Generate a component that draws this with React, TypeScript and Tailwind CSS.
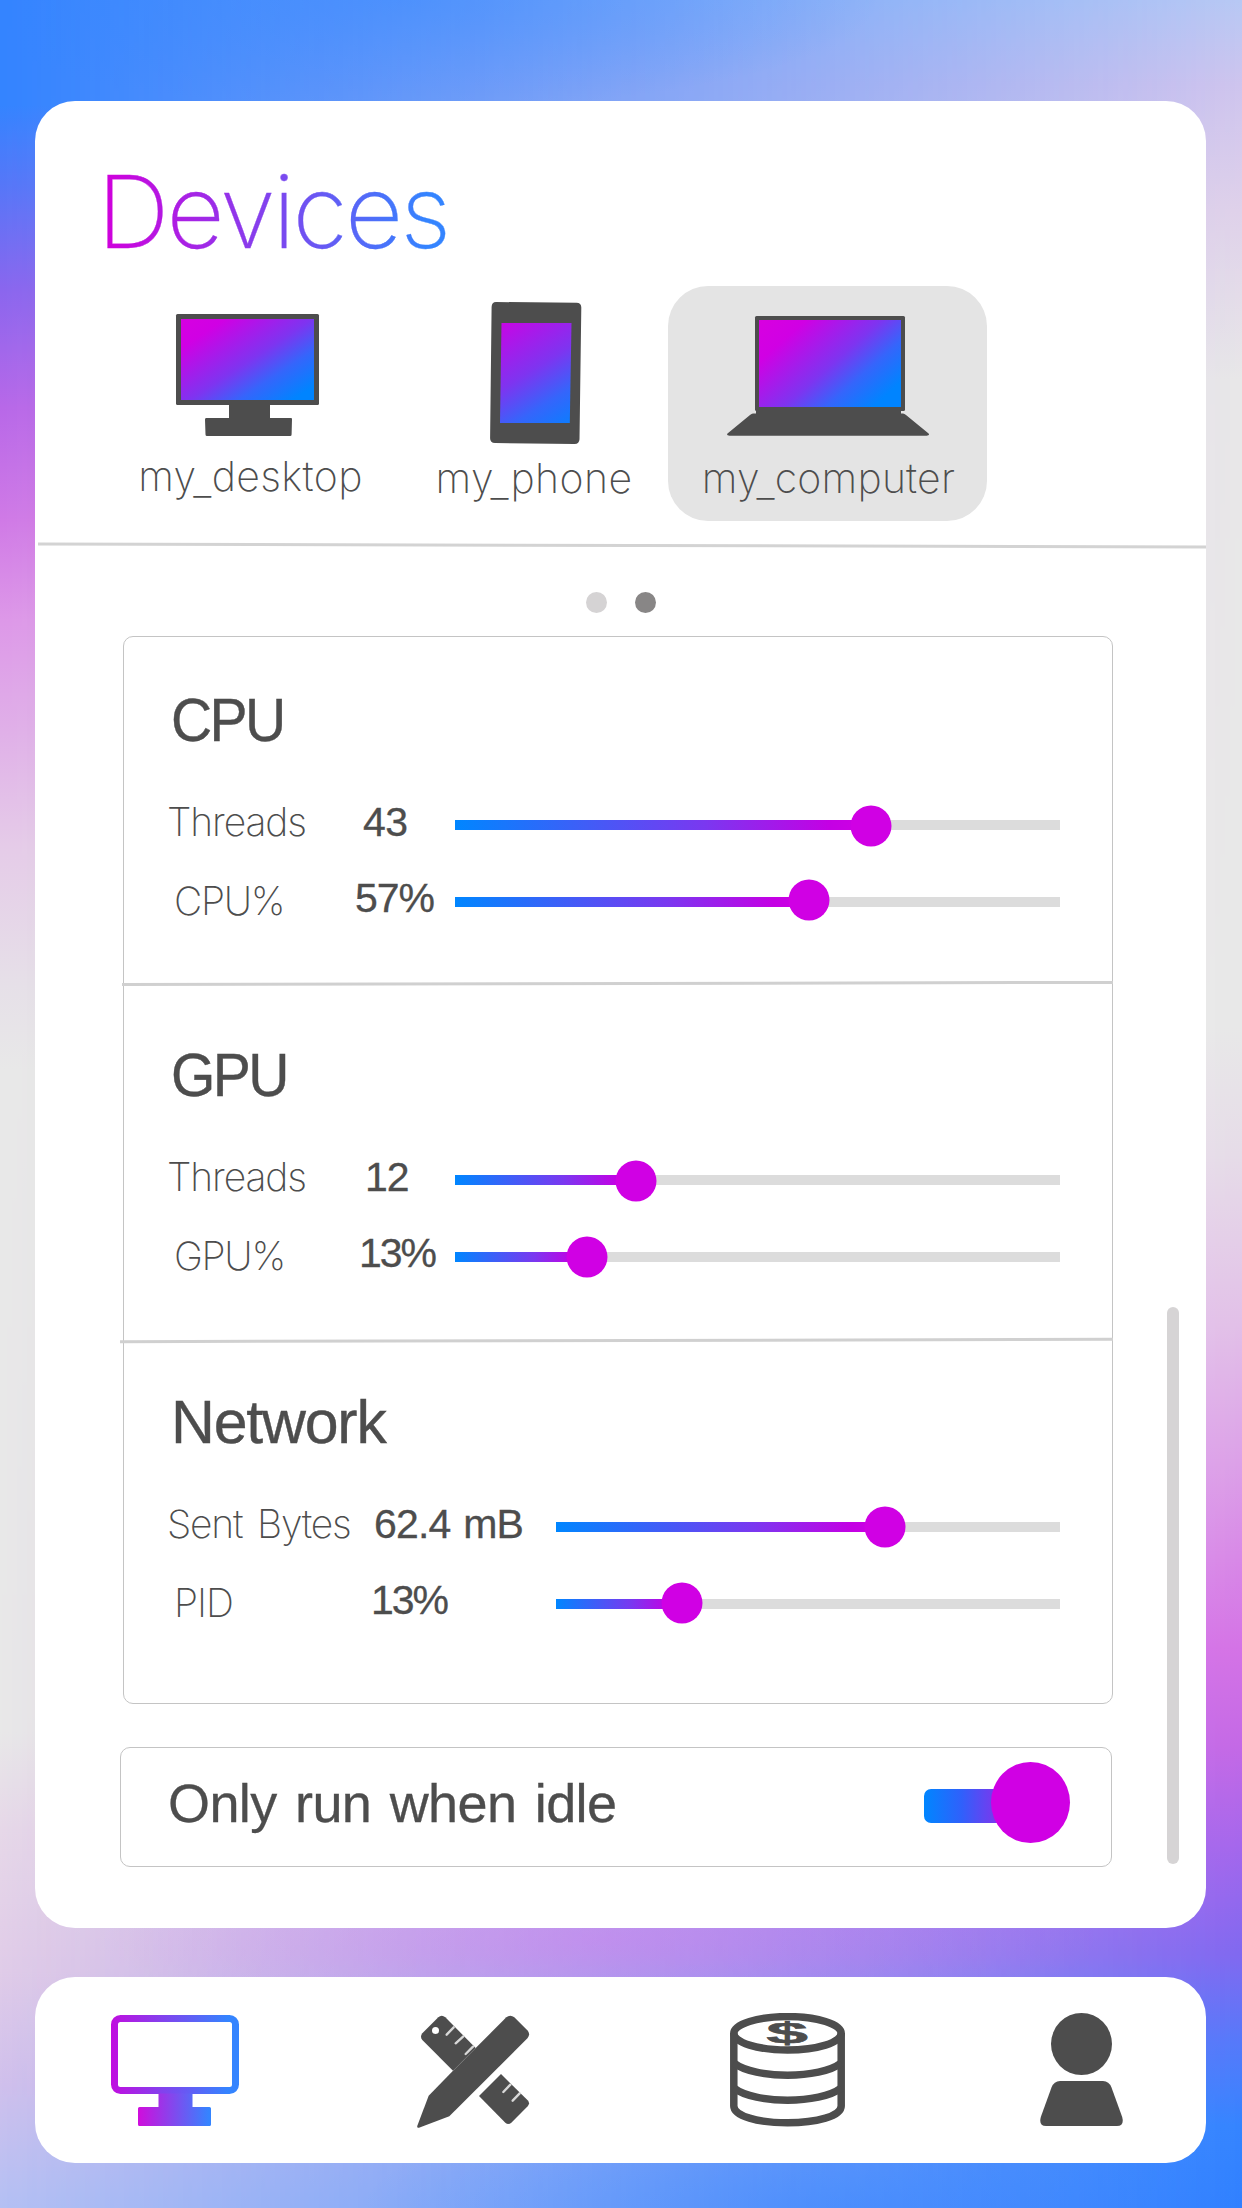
import type { ReactNode } from "react";

const INK = "#4d4d4d";

function Backdrop() {
  return (
    <>
      <div className="absolute inset-0 bg-[linear-gradient(to_bottom,#3484ff_0px,#3484ff_105px,#5577f8_183px,#8a66ee_289px,#b868e8_408px,#d07ae6_521px,#dd98e8_620px,#e0b0e8_732px,#e5cbe8_845px,#e6e0e8_986px,#e8e8e8_1070px,#e8e8e8_1732px,#e6d8e8_1830px,#e0cce8_1971px,#d0c0ec_2084px,#b4c0f4_2208px)]" />
      <div className="absolute inset-0 bg-[linear-gradient(to_bottom,#b8c8f4_0px,#cfc4ee_85px,#e0d2ea_211px,#e8e8e8_380px,#e8e8e8_1028px,#e6dce8_1155px,#e2c0e8_1324px,#dca0e8_1465px,#d472e6_1648px,#c468e6_1746px,#a566ec_1845px,#8068f0_1955px,#5578fa_2042px,#3484ff_2126px,#3080ff_2208px)] [mask-image:linear-gradient(to_right,transparent,black)]" />
      <div className="absolute inset-0 bg-[radial-gradient(ellipse_480px_110px_at_400px_0px,#3484ff66,#3484ff00),radial-gradient(ellipse_480px_110px_at_842px_2208px,#3484ff66,#3484ff00),radial-gradient(ellipse_500px_90px_at_600px_1940px,#d07cf066,#d07cf000)]" />
    </>
  );
}

function ScreenGradient({ id, x1, y1, x2, y2 }: { id: string; x1: number; y1: number; x2: number; y2: number }) {
  return (
    <linearGradient id={id} gradientUnits="userSpaceOnUse" x1={x1} y1={y1} x2={x2} y2={y2}>
      <stop offset="0" stopColor="#d800e0" />
      <stop offset="0.2" stopColor="#d000e4" />
      <stop offset="0.52" stopColor="#7e34f0" />
      <stop offset="0.7" stopColor="#3565fb" />
      <stop offset="0.9" stopColor="#0084ff" />
      <stop offset="1" stopColor="#0084ff" />
    </linearGradient>
  );
}

function DesktopIcon() {
  return (
    <svg className="h-[165px] w-[271px]" viewBox="115 286 271 165" fill={INK}>
      <defs>
        <ScreenGradient id="desk" x1={204} y1={297} x2={287} y2={422} />
      </defs>
      <rect x="176" y="314" width="143" height="91" rx="1.5" />
      <rect x="181" y="319" width="133" height="81" fill="url(#desk)" />
      <rect x="229" y="404" width="41" height="15" />
      <path d="M206 418h85q1 0 1 1l-.4 15.500q0 1.500-1.500 1.500H207q-1.500 0-1.500-1.500L205 419.500q0-1.500 1-1.500z" />
    </svg>
  );
}

function PhoneIcon() {
  return (
    <svg className="h-[167px] w-[268px]" viewBox="400 286 268 167" fill={INK}>
      <defs>
        <ScreenGradient id="phone" x1={475} y1={285} x2={580} y2={452} />
      </defs>
      <path d="M496 302l80.500.8q5 .2 4.800 5l-1.800 131.400q-.3 4.900-5 4.800l-79.500-1q-5-.2-4.900-5l1.500-131q.2-5 4.400-5z" />
      <path d="M501.500 323H571.500L569.800 423H500z" fill="url(#phone)" />
    </svg>
  );
}

function LaptopIcon() {
  return (
    <svg className="h-[167px] w-[319px]" viewBox="668 286 319 167" fill={INK}>
      <defs>
        <ScreenGradient id="lap" x1={778} y1={303} x2={882} y2={420} />
      </defs>
      <rect x="755" y="316" width="150" height="95" rx="1.500" />
      <rect x="759" y="320" width="142" height="87" fill="url(#lap)" />
      <path d="M756 407h145v6.500h2q1.500 0 3 1.500l22.600 18.500q1.500 2-2 2.200H729.500q-3.500-.2-2-2.200L750 415q1.500-1.500 3-1.500h3z" />
    </svg>
  );
}

function DeviceTab({ owner, name, icon, box, text }: { owner: string; name: string; icon: ReactNode; box: string; text: string }) {
  return (
    <button className={`flex h-[235px] flex-col items-center ${box}`}>
      {icon}
      <span className={`text-[41px] leading-[50px] font-extralight whitespace-nowrap ${text}`}>
        {owner}
        <span className="relative top-[5px]">_</span>
        {name}
      </span>
    </button>
  );
}

function Slider({ fill, drop = 0 }: { fill: number; drop?: number }) {
  return (
    <div className="relative h-[10px] grow bg-[#dcdcdc]">
      <div className="h-full bg-[linear-gradient(to_right,#0086ff,#7a38f0_60%,#c400e4_90%,#d000e4)]" style={{ width: fill }} />
      <div
        className="absolute top-1/2 h-[41px] w-[41px] -translate-x-1/2 -translate-y-1/2 rounded-full bg-[#d000e4]"
        style={{ left: fill, marginTop: drop }}
      />
    </div>
  );
}

type RowProps = {
  label: string;
  value: string;
  fill: number;
  drop?: number;
  labelBox: string;
  valueBox: string;
};

function MetricRow({ label, value, fill, drop, labelBox, valueBox }: RowProps) {
  return (
    <div className="flex h-[77px] items-center">
      <span className={`shrink-0 text-[39px] leading-[48px] font-extralight whitespace-nowrap ${labelBox}`}>{label}</span>
      <span
        className={`shrink-0 font-['Liberation_Sans',sans-serif] text-[41px] leading-[48px] whitespace-nowrap [-webkit-text-stroke:0.3px] ${valueBox}`}
      >
        {value}
      </span>
      <Slider fill={fill} drop={drop} />
    </div>
  );
}

function Section({ title, box, heading, children }: { title: string; box: string; heading: string; children: ReactNode }) {
  return (
    <section className={`pr-[52px] pl-[43px] ${box}`}>
      <h2 className={`origin-left font-['Liberation_Sans',sans-serif] text-[62px] leading-[80px] [-webkit-text-stroke:0.4px] ${heading}`}>
        {title}
      </h2>
      {children}
    </section>
  );
}

function BottomNav() {
  return (
    <nav className="relative mt-[49px] flex h-[186px] items-center rounded-[40px] bg-white pl-[76px]">
      <svg className="h-[114px] w-[128px]" viewBox="111 2013 128 114">
        <defs>
          <linearGradient id="nav-frame" gradientUnits="userSpaceOnUse" x1="98" x2="228" y1="0" y2="0">
            <stop offset="0" stopColor="#d000dc" />
            <stop offset="1" stopColor="#3484ff" />
          </linearGradient>
          <linearGradient id="nav-base" gradientUnits="userSpaceOnUse" x1="138" x2="209" y1="0" y2="0">
            <stop offset="0" stopColor="#d00ddc" />
            <stop offset="1" stopColor="#3484ff" />
          </linearGradient>
        </defs>
        <rect x="114.500" y="2018.500" width="121" height="72" rx="6" fill="none" stroke="url(#nav-frame)" strokeWidth="7" />
        <path d="M158.500 2093.500h34v13.500h17q1.500 0 1.500 1.500v16q0 1.500-1.500 1.500h-70q-1.500 0-1.500-1.500v-16q0-1.500 1.500-1.500h19z" fill="url(#nav-base)" />
      </svg>
      <svg className="ml-[176px] h-[114px] w-[117px]" viewBox="1005 159 351 342" fill={INK} overflow="visible">
        <path d="M1027 220L1075 172Q1085 163 1096 172L1187 264L1119 332L1027 240Q1019 230 1027 220Z" />
        <path d="M1012 497L1046 407L1119 332L1279 172Q1291 163 1303 172L1342 211Q1352 222 1343 234L1108 469L1017 503Q1010 505 1012 497Z" />
        <path d="M1263 342L1343 421Q1351 430 1343 439L1294 488Q1285 496 1276 488L1197 408Z" />
        <circle cx="1066.500" cy="211.500" r="10.500" fill="#fff" />
        <path d="M1121 202l-21 22M1150 229l-23 21M1179 260l-22 22M1291 374l-21 22M1319 400l-21 22" stroke="#d8d8d8" strokeWidth="7" strokeLinecap="round" />
      </svg>
      <svg className="ml-[198px] h-[114px] w-[115px]" viewBox="0 0 115 114" fill="none" stroke={INK} strokeWidth="7.500">
        <ellipse cx="57.500" cy="20.300" rx="53.700" ry="16.700" />
        <path d="M3.800 20V93C3.800 103 28 109.800 57.500 109.800S111.200 103 111.200 93V20" />
        <path d="M3.800 50C25 66.300 90 66.300 111.200 50M3.800 75C25 91.300 90 91.300 111.200 75" />
        <text
          transform="translate(57 30) scale(2.500 1)"
          textAnchor="middle"
          fontFamily="Liberation Sans, sans-serif"
          fontWeight="700"
          fontSize="30"
          fill={INK}
          stroke={INK}
          strokeWidth="0.5"
        >
          $
        </text>
      </svg>
      <svg className="ml-[195px] h-[114px] w-[83px]" viewBox="0 0 83 114" fill={INK}>
        <ellipse cx="41.500" cy="31" rx="30.500" ry="31" />
        <path d="M20 68H63Q69 68 71.500 74.500L82.200 104Q84.500 113 77 113H6Q-1.500 113 .8 104L11.500 74.500Q14 68 20 68Z" />
      </svg>
    </nav>
  );
}

export default function App() {
  return (
    <div className="relative h-[2208px] w-[1242px] overflow-hidden pt-[101px] pr-[36px] pl-[35px] font-['Inter',sans-serif] text-[#4d4d4d]">
      <Backdrop />
      <main className="relative h-[1827px] rounded-[40px] bg-white pt-[50px]">
        <h1 className="ml-[62px] h-[120px] w-[360px] bg-[linear-gradient(to_right,#d000dc_8px,#3484ff_330px)] bg-clip-text text-[101px] leading-[120px] font-extralight tracking-[-2.800px] whitespace-nowrap text-transparent [-webkit-text-stroke:0.3px_transparent]">
          Devices
        </h1>

        <div className="mt-[15px] flex pl-[80px]">
          <DeviceTab owner="my" name="desktop" icon={<DesktopIcon />} box="w-[271px]" text="tracking-[0.400px]" />
          <DeviceTab owner="my" name="phone" icon={<PhoneIcon />} box="ml-[14px] w-[268px]" text="tracking-[0.400px]" />
          <DeviceTab owner="my" name="computer" icon={<LaptopIcon />} box="w-[319px] rounded-[40px] bg-[#e4e4e4]" text="pl-[2px] tracking-[0.200px]" />
        </div>

        <div className="mt-[23px] ml-[3px] h-[3px] rotate-[0.150deg] bg-[#d3d3d3]" />

        <div className="mt-[45px] ml-[551px] flex gap-[28px]">
          <span className="h-[21px] w-[21px] rounded-full bg-[#d5d3d4]" />
          <span className="h-[21px] w-[21px] rounded-full bg-[#888686]" />
        </div>

        <div className="mt-[23px] ml-[88px] h-[1068px] w-[990px] rounded-[10px] border border-[#c4c4c4]">
          <Section title="CPU" box="h-[345px] pt-[43px]" heading="mb-[26px] ml-[4px] scale-x-[0.920] tracking-[-2.800px]">
            <MetricRow label="Threads" value="43" fill={415.5} drop={1} labelBox="w-[187px] pb-[6px] tracking-[-1.100px]" valueBox="w-[101px] pl-[9px] pb-[5px] tracking-[-0.500px]" />
            <MetricRow label="CPU%" value="57%" fill={353.5} drop={-2} labelBox="w-[187px] pl-[7px] pb-[1px] tracking-[-1.300px]" valueBox="w-[101px] pl-[1px] pb-[8px] tracking-[-1px]" />
          </Section>
          <div className="-ml-[2px] h-[2.500px] w-[991px] rotate-[-0.130deg] bg-[#d0d0d0]" />
          <Section title="GPU" box="mt-[0.500px] h-[354px] pt-[50px]" heading="mb-[26px] ml-[4px] scale-x-[0.920] tracking-[-2.800px]">
            <MetricRow label="Threads" value="12" fill={180.5} drop={1} labelBox="w-[187px] pb-[6px] tracking-[-1.100px]" valueBox="w-[101px] pl-[11px] pb-[6px] tracking-[-1px]" />
            <MetricRow label="GPU%" value="13%" fill={131.5} labelBox="w-[187px] pl-[7px] pb-[1px] tracking-[-1.300px]" valueBox="w-[101px] pl-[5px] pb-[7px] tracking-[-2px]" />
          </Section>
          <div className="-ml-[4px] h-[2.500px] w-[993px] rotate-[-0.130deg] bg-[#d0d0d0]" />
          <Section title="Network" box="pt-[40px]" heading="mb-[27px] ml-[4px] scale-x-[0.980] tracking-[-1.200px]">
            <MetricRow label="Sent Bytes" value="62.4 mB" fill={328.5} labelBox="w-[203px] pb-[7px] tracking-[-1.200px] [word-spacing:5px]" valueBox="w-[186px] pl-[4px] pb-[7px] tracking-[-0.800px] [word-spacing:2px]" />
            <MetricRow label="PID" value="13%" fill={125.5} drop={-1} labelBox="w-[203px] pl-[7px] pb-[2px] tracking-[-1px]" valueBox="w-[186px] pl-[1px] pb-[8px] tracking-[-2px]" />
          </Section>
        </div>

        <div className="mt-[43px] ml-[85px] flex h-[120px] w-[992px] items-center justify-between rounded-[10px] border border-[#c4c4c4] pr-[41px] pl-[47px]">
          <span className="pb-[8px] font-['Liberation_Sans',sans-serif] text-[54px] leading-[70px] tracking-[-0.600px] whitespace-nowrap [-webkit-text-stroke:0.3px] [word-spacing:4px]">
            Only run when idle
          </span>
          <button className="flex items-center">
            <span className="mb-[3px] h-[34px] w-[107px] rounded-[7px] bg-[linear-gradient(to_right,#0086ff,#3060fb_38px,#7a38ee_72px,#d000e4)]" />
            <span className="mb-[9px] -ml-[40px] h-[81px] w-[79px] rounded-[50%] bg-[#d000e4]" />
          </button>
        </div>

        <div className="absolute top-[1206px] left-[1132px] h-[557px] w-[12px] rounded-full bg-[#d6d4d5]" />
      </main>
      <BottomNav />
    </div>
  );
}
